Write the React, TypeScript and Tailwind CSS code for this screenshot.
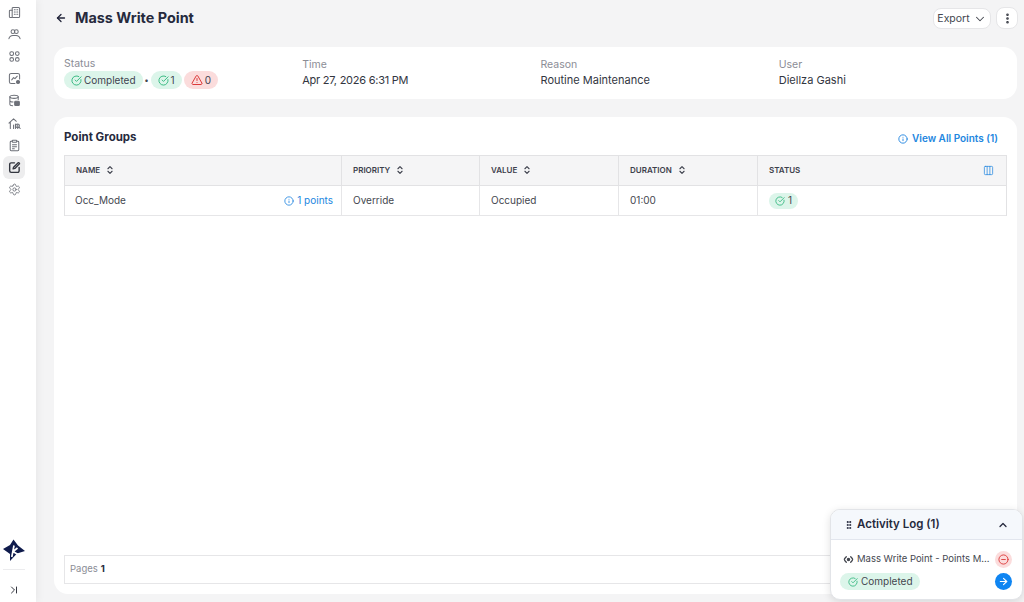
import React from "react";
import { ArrowLeft, ChevronDown, ChevronUp, ChevronsUpDown, CircleCheckBig, TriangleAlert, Info, Columns3, EllipsisVertical, GripVertical, ArrowRight, CircleMinus, Settings, ChevronLast } from "lucide-react";

function NavSvg({ children, sw = 1.1 }: { children: React.ReactNode; sw?: number }) {
  return (
    <svg viewBox="0 0 14 14" className="size-[13px]" fill="none" stroke="currentColor" strokeWidth={sw} strokeLinecap="round" strokeLinejoin="round">
      {children}
    </svg>
  );
}

const navIcons: React.ReactNode[] = [
  <NavSvg key="0"><rect x="4.5" y="1.5" width="8" height="11" rx="1.2" /><path d="M4.5 4.5H2.5a1 1 0 0 0-1 1v6a1 1 0 0 0 1 1h2M6.8 4h1M9.5 4h1M6.8 6.5h1M9.5 6.5h1M6.8 9h1M9.5 9h1" /></NavSvg>,
  <NavSvg key="1"><circle cx="5.3" cy="4" r="2" /><circle cx="9" cy="4" r="2" /><path d="M1 11.5c.6-2.4 2.3-3.5 4.3-3.5h3.4c2 0 3.7 1.1 4.3 3.5" /></NavSvg>,
  <NavSvg key="2"><rect x="2" y="1.8" width="4" height="4" rx="1.8" /><circle cx="10" cy="3.8" r="2" /><circle cx="4" cy="10.2" r="2" /><circle cx="10" cy="10.2" r="2" /></NavSvg>,
  <NavSvg key="3"><path d="M7.5 12.5H3.5a2 2 0 0 1-2-2v-7a2 2 0 0 1 2-2h7a2 2 0 0 1 2 2v4" /><path d="M4 8.5 6 6l1.5 1.2L10 4.5" /><circle cx="10.8" cy="10.8" r="1.7" fill="currentColor" /></NavSvg>,
  <NavSvg key="4"><ellipse cx="6.5" cy="3" rx="4.5" ry="1.7" /><path d="M2 3v8c0 .9 1.5 1.5 3 1.6M11 3v3M2 7c0 .9 1.6 1.6 3.5 1.7" /><rect x="7.2" y="7.8" width="5" height="4.7" rx="1" fill="currentColor" /></NavSvg>,
  <NavSvg key="5"><path d="M1 6.5 6 2l3 2.6M2.5 6v6.5M6 12.5V8.5" /><path d="M8 12.5V7.5M10.5 12.5V8" /><circle cx="10.3" cy="9.5" r="2" /><path d="m11.8 11 1.3 1.4" /></NavSvg>,
  <NavSvg key="6"><path d="M4.5 2.5H3.4a1 1 0 0 0-1 1v8.2a1 1 0 0 0 1 1h7.2a1 1 0 0 0 1-1V3.5a1 1 0 0 0-1-1H9.5" /><rect x="4.6" y="1.3" width="4.8" height="2.2" rx=".6" /><path d="M4.8 6.2h4.4M4.8 8.4h4.4M4.8 10.5h2" /></NavSvg>,
  <NavSvg key="7" sw={1.5}><path d="M7 2H3.4A1.6 1.6 0 0 0 1.8 3.6v7A1.6 1.6 0 0 0 3.4 12.2h7a1.6 1.6 0 0 0 1.6-1.6V7" /><path d="M11 1.8a1 1 0 0 1 1.3 1.3L7.4 8l-1.9.5.5-1.9Z" /></NavSvg>,
  <Settings key="8" className="size-[13px]" strokeWidth={1.6} />,
];

function Pill({ children, red }: { children: React.ReactNode; red?: boolean }) {
  return (
    <span className={`flex h-[18px] items-center gap-[2px] rounded-full px-[7px] text-[10px] text-[#3f4350] ${red ? "bg-[#fbdcdc]" : "bg-[#dcf5ea]"}`}>
      {children}
    </span>
  );
}

function Head({ label, w }: { label: string; w: string }) {
  return (
    <div className={`flex h-full items-center gap-[5px] border-r border-[#e2e2e4] pb-[1px] pl-[11px] text-[8px] font-semibold text-[#3d404c] ${w}`}>
      {label}
      <ChevronsUpDown className="size-[10px]" strokeWidth={2.6} />
    </div>
  );
}

function Cell({ children, w }: { children: React.ReactNode; w: string }) {
  return <div className={`flex h-full items-center border-r border-[#e6e6e8] pl-[11px] text-[10px] text-[#44474f] ${w}`}>{children}</div>;
}

function Info2({ label, value, tight }: { label: string; value: string; tight?: boolean }) {
  return (
    <div className="w-[238.5px]">
      <div className="text-[10.5px] leading-[14px] text-[#8b8d96]">{label}</div>
      <div className={`mt-[-1px] text-[11px] leading-[18px] text-[#33363f] ${tight ? "tracking-[-0.25px]" : ""}`}>{value}</div>
    </div>
  );
}

export default function App() {
  return (
    <div className="relative flex h-[602px] w-[1024px] overflow-hidden bg-[#f4f4f5] font-['Inter',sans-serif]">
      <aside className="flex w-[36px] flex-col bg-white pl-[3px] shadow-[2px_0_8px_rgba(0,0,0,0.05)]">
        <nav className="flex flex-col pt-[1px]">
          {navIcons.map((icon, i) => (
            <div key={i} className={`flex h-[22.2px] w-[22px] items-center justify-center rounded-md ${i === 7 ? "bg-[#ededee] text-[#33363f]" : "text-[#6d7078]"}`}>
              {icon}
            </div>
          ))}
        </nav>
        <div className="mt-auto flex w-[22px] flex-col items-center">
          <svg viewBox="0 0 24 24" className="mb-[7px] size-[24px]">
            <path d="M11.5 1.5 L16 7.5 L23 13 L15 15.5 L8 23 L8 16 L1 11 L8 7 Z" fill="#0f1b4c" />
            <path d="M12 7.5 L9.8 19 M11 13.5 L15.5 10 M11 13.5 L16 16.5" stroke="#fff" strokeWidth="1.7" fill="none" />
          </svg>
          <div className="h-px w-[22px] bg-[#ececee]" />
          <div className="flex h-[32px] items-center pt-[8px] text-[#33363f]">
            <ChevronLast className="size-[12px]" strokeWidth={2} />
          </div>
        </div>
      </aside>

      <main className="flex w-[988px] flex-col pr-[7px] pl-[18px]">
        <header className="flex h-[47px] items-start justify-between pt-[7px]">
          <div className="flex items-center gap-[3px] pl-[1px] text-[#21243a]">
            <ArrowLeft className="mr-[5px] size-[12px]" strokeWidth={2.6} />
            <h1 className="text-[14.4px] leading-[22px] font-bold text-[#262a3d]">Mass Write Point</h1>
          </div>
          <div className="flex items-center gap-[5px]">
            <button className="flex h-[21px] w-[58px] items-center justify-center gap-[3px] rounded-lg border border-[#e6e6e8] bg-white pt-[1px] text-[10.5px] text-[#44474f]">
              Export <ChevronDown className="size-[14px]" strokeWidth={1.8} />
            </button>
            <button className="mr-[-1px] flex size-[22px] items-center justify-center rounded-lg border border-[#e6e6e8] bg-white text-[#33363f]">
              <EllipsisVertical className="size-[13px]" strokeWidth={2.8} />
            </button>
          </div>
        </header>

        <section className="flex h-[52px] items-center rounded-[14px] bg-white pl-[10px]">
          <div className="w-[238.5px]">
            <div className="text-[10.5px] leading-[14px] text-[#8b8d96]">Status</div>
            <div className="flex items-center">
              <Pill><CircleCheckBig className="size-[11px] text-[#2fb67c]" />Completed</Pill>
              <span className="w-[8px] text-center text-[8px] text-[#44474f]">•</span>
              <Pill><CircleCheckBig className="size-[11px] text-[#2fb67c]" />1</Pill>
              <span className="w-[2px]" />
              <Pill red><TriangleAlert className="size-[12px] text-[#dc3a3a]" />0</Pill>
            </div>
          </div>
          <Info2 label="Time" value="Apr 27, 2026 6:31 PM" tight />
          <Info2 label="Reason" value="Routine Maintenance" />
          <Info2 label="User" value="Diellza Gashi" />
        </section>

        <section className="mt-[18px] flex h-[477px] flex-col rounded-[14px] bg-white px-[10px] pb-[10px]">
          <div className="flex h-[38px] items-center justify-between pr-[9px]">
            <h2 className="mt-[3px] text-[11.5px] font-bold text-[#262a3d]">Point Groups</h2>
            <a className="mt-[5px] flex items-center gap-[4px] text-[10px] font-semibold text-[#2286e0]">
              <Info className="size-[10px]" strokeWidth={2.2} />View All Points (1)
            </a>
          </div>
          <div className="flex flex-col border border-b-0 border-[#e2e2e4]">
            <div className="flex h-[30px] items-center border-b border-[#e2e2e4] bg-[#f5f5f6]">
              <Head label="NAME" w="w-[277px]" />
              <Head label="PRIORITY" w="w-[138px]" />
              <Head label="VALUE" w="w-[139px]" />
              <Head label="DURATION" w="w-[139px]" />
              <div className="flex h-full flex-1 items-center justify-between pr-[12px] pb-[1px] pl-[11px] text-[8px] font-semibold text-[#3d404c]">
                STATUS
                <Columns3 className="size-[11px] text-[#2286e0]" strokeWidth={1.6} />
              </div>
            </div>
            <div className="flex h-[30px] items-center border-b border-[#e6e6e8]">
              <Cell w="w-[277px]">
                <span className="ml-[-1px]">Occ_Mode</span>
                <span className="mr-[8px] ml-auto flex items-center gap-[3px] text-[#2286e0]"><Info className="size-[10px]" />1 points</span>
              </Cell>
              <Cell w="w-[138px]">Override</Cell>
              <Cell w="w-[139px]">Occupied</Cell>
              <Cell w="w-[139px]">01:00</Cell>
              <div className="flex h-full flex-1 items-center pl-[11px] text-[10px] text-[#44474f]">
                <span className="flex h-[16px] items-center gap-[3px] rounded-full bg-[#dcf5ea] px-[6px]"><CircleCheckBig className="size-[10px] text-[#2fb67c]" />1</span>
              </div>
            </div>
          </div>
          <div className="mt-auto flex h-[29px] items-center gap-[3px] border border-[#e6e6e8] pl-[5px] text-[9.5px] text-[#8b8d96]">
            Pages <b className="font-bold text-[#262a3d]">1</b>
          </div>
        </section>
      </main>

      <div className="absolute top-[509px] left-[830px] h-[91px] w-[193px] overflow-hidden rounded-[10px] border border-[#e2e4e8] bg-white shadow-[0_2px_8px_rgba(0,0,0,0.12)]">
        <div className="flex h-[30px] items-center justify-between border-b border-[#e2e6ee] bg-[#f5f8fc] px-[13px]">
          <div className="flex items-center gap-[3px] text-[11.5px] font-semibold text-[#262a3d]">
            <GripVertical className="size-[10px]" strokeWidth={3} />Activity Log (1)
          </div>
          <ChevronUp className="size-[12px] text-[#262a3d]" strokeWidth={2.6} />
        </div>
        <div className="flex flex-col gap-[3px] pt-[10px] pr-[10px] pl-[9px]">
          <div className="flex h-[19px] items-center justify-between">
            <div className="flex items-center gap-[3px] pl-[3px] text-[9.5px] whitespace-nowrap text-[#44474f]">
              <svg viewBox="0 0 14 14" className="size-[11px]" fill="none" stroke="currentColor" strokeWidth="1.6" strokeLinecap="round">
                <circle cx="7" cy="7" r="1.4" fill="currentColor" />
                <path d="M4.2 3.5 2.5 5.4a2.4 2.4 0 0 0 0 3.2l1.7 1.9M9.8 3.5l1.7 1.9a2.4 2.4 0 0 1 0 3.2l-1.7 1.9" />
              </svg>
              Mass Write Point - Points M...
            </div>
            <span className="flex size-[17px] items-center justify-center rounded-full bg-[#fbdcdc] text-[#dc3a3a]"><CircleMinus className="size-[11px]" /></span>
          </div>
          <div className="flex h-[19px] items-center justify-between">
            <span className="flex h-[17px] items-center gap-[3px] rounded-full bg-[#dcf5ea] pr-[7px] pl-[8px] text-[10px] text-[#44474f]"><CircleCheckBig className="size-[10px] text-[#2fb67c]" />Completed</span>
            <span className="flex size-[17px] items-center justify-center rounded-full bg-[#0f85f2] text-white"><ArrowRight className="size-[11px]" strokeWidth={2.4} /></span>
          </div>
        </div>
      </div>
    </div>
  );
}
